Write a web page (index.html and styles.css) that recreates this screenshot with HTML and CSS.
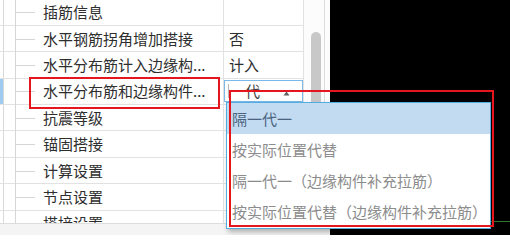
FILE: index.html
```html
<!DOCTYPE html>
<html lang="zh-CN">
<head>
<meta charset="utf-8">
<title>属性</title>
<link rel="stylesheet" href="styles.css">
</head>
<body>
<div class="app">
  <div class="panel">
    <div class="grid">
      <div class="table">
        <div class="row first"><span class="lead"></span><span class="tree"></span><span class="name">插筋信息</span><span class="val"></span></div>
        <div class="row"><span class="lead"></span><span class="tree"></span><span class="name">水平钢筋拐角增加搭接</span><span class="val">否</span></div>
        <div class="row"><span class="lead"></span><span class="tree"></span><span class="name">水平分布筋计入边缘构...</span><span class="val">计入</span></div>
        <div class="row selected"><span class="lead"></span><span class="tree"></span><span class="name">水平分布筋和边缘构件...</span><span class="val combo-cell"><span class="combo"><span class="caret"></span><span class="combo-text">一代一</span><svg class="arrow" width="7" height="5" viewBox="0 0 7 5"><polygon points="3.5,0.5 6.5,4.5 0.5,4.5" fill="#606060"/></svg></span></span></div>
        <div class="row"><span class="lead"></span><span class="tree"></span><span class="name">抗震等级</span><span class="val"></span></div>
        <div class="row"><span class="lead"></span><span class="tree"></span><span class="name">锚固搭接</span><span class="val"></span></div>
        <div class="row"><span class="lead"></span><span class="tree"></span><span class="name">计算设置</span><span class="val"></span></div>
        <div class="row"><span class="lead"></span><span class="tree"></span><span class="name">节点设置</span><span class="val"></span></div>
        <div class="row"><span class="lead"></span><span class="tree"></span><span class="name">搭接设置</span><span class="val"></span></div>
      </div>
      <div class="vscroll"><div class="thumb"></div></div>
    </div>
    <div class="foot"></div>
  </div>
  <div class="canvas"><div class="gline"></div></div>

  <div class="dropdown">
    <div class="item active">隔一代一</div>
    <div class="item">按实际位置代替</div>
    <div class="item">隔一代一（边缘构件补充拉筋）</div>
    <div class="item">按实际位置代替（边缘构件补充拉筋）</div>
  </div>

  <div class="mark mark-name"></div>
  <div class="mark mark-list"></div>
</div>
</body>
</html>
```

FILE: styles.css
```css
html, body {
  margin: 0;
  padding: 0;
}
body {
  width: 510px;
  height: 235px;
  overflow: hidden;
  font-family: "Noto Sans CJK SC", "Microsoft YaHei", sans-serif;
  font-size: 15px;
  color: #333333;
  background: #ffffff;
}
.app {
  position: relative;
  display: flex;
  width: 510px;
  height: 235px;
  overflow: hidden;
}
.panel {
  width: 330px;
  display: flex;
  flex-direction: column;
  background: #ffffff;
}
.grid {
  display: flex;
  height: 223px;
  overflow: hidden;
}
.table {
  width: 304px;
  display: flex;
  flex-direction: column;
  overflow: hidden;
}
.row {
  display: flex;
  flex: 0 0 auto;
  height: 26.4px;
  box-sizing: border-box;
  border-bottom: 1px solid #e2e2e2;
  line-height: 20px;
}
.row.first {
  height: 25.9px;
}
.lead {
  width: 4px;
  flex: 0 0 auto;
  box-sizing: border-box;
  border-right: 1px solid #d9d9d9;
}
.row.selected .lead {
  background: #9fcbf0;
}
.tree {
  width: 39px;
  flex: 0 0 auto;
  position: relative;
}
.tree::before {
  content: "";
  position: absolute;
  left: 11px;
  top: -1px;
  bottom: -1px;
  width: 1px;
  background: #d6d6d6;
}
.tree::after {
  content: "";
  position: absolute;
  left: 11px;
  top: 50%;
  width: 20px;
  height: 1px;
  background: #d6d6d6;
}
.name {
  width: 181px;
  flex: 0 0 auto;
  box-sizing: border-box;
  border-right: 1px solid #e2e2e2;
  display: flex;
  align-items: center;
  white-space: nowrap;
  overflow: hidden;
  color: #2e2e2e;
}
.val {
  width: 80px;
  flex: 0 0 auto;
  box-sizing: border-box;
  border-right: 1px solid #e2e2e2;
  padding-left: 5px;
  display: flex;
  align-items: center;
  white-space: nowrap;
  color: #2e2e2e;
}
.combo-cell {
  padding-left: 0;
  align-items: flex-start;
}
.combo {
  margin-top: 1.3px;
  width: 100%;
  height: 22px;
  box-sizing: border-box;
  border: 1px solid #7db9e8;
  display: flex;
  align-items: center;
  padding-left: 3px;
  background: #ffffff;
}
.caret {
  width: 1px;
  height: 14px;
  background: #b8b8b8;
  margin-right: 1px;
}
.combo-text {
  color: #444444;
}
.arrow {
  margin-left: 8px;
  margin-top: 6px;
}
.vscroll {
  width: 26px;
  flex: 0 0 auto;
  background: linear-gradient(to right, #fcfcfc 20px, #dcdcdc 20px, #dcdcdc 21px, #fcfcfc 21px);
}
.thumb {
  margin-top: 32px;
  margin-left: 7px;
  width: 10px;
  height: 185px;
  border-radius: 5px;
  background: #c8c8c8;
}
.foot {
  flex: 1 1 auto;
  box-sizing: border-box;
  border-top: 1px solid #dddddd;
  background: #f4f4f4;
}
.canvas {
  flex: 1 1 auto;
  background: #000000;
  display: flex;
  flex-direction: column;
  justify-content: flex-end;
  padding-bottom: 13px;
}
.gline {
  height: 1px;
  background: #2f7a2f;
}
.dropdown {
  position: absolute;
  left: 226px;
  top: 102px;
  width: 265px;
  height: 127px;
  box-sizing: border-box;
  border: 1px solid #53ade0;
  background: #ffffff;
  box-shadow: 2px 3px 5px rgba(0, 0, 0, 0.28);
  z-index: 2;
}
.item {
  height: 31px;
  line-height: 31px;
  padding-left: 5px;
  color: #8c8c8c;
  white-space: nowrap;
}
.item.active {
  background: #c3dbf1;
  color: #4a6480;
}
.mark {
  position: absolute;
  box-sizing: border-box;
  border: 2px solid #e5161e;
  z-index: 3;
}
.mark-name {
  left: 29px;
  top: 77px;
  width: 191px;
  height: 32px;
}
.mark-list {
  left: 229px;
  top: 90px;
  width: 265px;
  height: 137px;
}
```
